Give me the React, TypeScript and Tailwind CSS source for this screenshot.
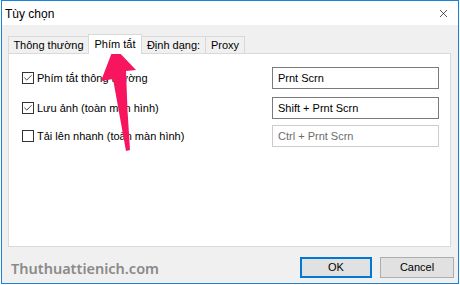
import { Check, X } from 'lucide-react';

const tabs = [
  { label: 'Thông thường', width: 'w-[81px]', active: false },
  { label: 'Phím tắt', width: 'w-[54px]', active: true },
  { label: 'Định dạng:', width: 'w-[65px]', active: false },
  { label: 'Proxy', width: 'w-[40px]', active: false },
];

const rows = [
  { label: 'Phím tắt thông thường', key: 'Prnt Scrn', checked: true, disabled: false, mt: 'mt-[13px]' },
  { label: 'Lưu ảnh (toàn màn hình)', key: 'Shift + Prnt Scrn', checked: true, disabled: false, mt: 'mt-[8px]' },
  { label: 'Tải lên nhanh (toàn màn hình)', key: 'Ctrl + Prnt Scrn', checked: false, disabled: true, mt: 'mt-[6px]' },
];

export default function App() {
  return (
    <div
      className="relative w-[460px] h-[285px] bg-white overflow-hidden text-[11px] text-black"
      style={{ fontFamily: '"Liberation Sans", Arial, sans-serif' }}
    >
      <div className="ml-[1px] w-[458px] h-[284px] border border-[#1a84d8] bg-[#f0f0f0] flex flex-col">
        {/* Title bar */}
        <div className="h-[24px] bg-white flex items-center justify-between pl-[3px] pr-[8px]">
          <span className="text-[12px] leading-none mt-[1px]">Tùy chọn</span>
          <X className="w-[13px] h-[13px] text-[#111]" strokeWidth={1.3} />
        </div>

        {/* Tabs */}
        <div className="flex items-end pl-[6px] h-[28px] relative z-10">
          {tabs.map((tab) => (
            <div
              key={tab.label}
              className={
                tab.active
                  ? `${tab.width} h-[20px] -ml-px bg-white border border-b-0 border-[#d9d9d9] flex items-center justify-center -mb-px whitespace-nowrap`
                  : `${tab.width} h-[17px] -ml-px first:ml-0 bg-[#f0f0f0] border border-b-0 border-[#d9d9d9] flex items-center justify-center whitespace-nowrap`
              }
            >
              <span className="leading-none">{tab.label}</span>
            </div>
          ))}
        </div>

        {/* Panel */}
        <div className="ml-[6px] w-[443px] h-[194px] bg-white border border-[#d9d9d9] flex flex-col pl-[13px] pr-[11px]">
          {rows.map((row) => (
            <div key={row.label} className={`${row.mt} h-[22px] flex items-center justify-between`}>
              <div className="flex items-center gap-[3px]">
                <div className="w-[12px] h-[12px] border border-[#333] bg-white flex items-center justify-center">
                  {row.checked && <Check className="w-[10px] h-[10px] text-[#333]" strokeWidth={2.2} />}
                </div>
                <span className="leading-none">{row.label}</span>
              </div>
              <div
                className={
                  row.disabled
                    ? 'w-[167px] h-[22px] border border-[#cccccc] flex items-center px-[5px] text-[#6d6d6d]'
                    : 'w-[167px] h-[22px] border border-[#7a7a7a] flex items-center px-[5px]'
                }
              >
                <span className="leading-none">{row.key}</span>
              </div>
            </div>
          ))}
        </div>

        {/* Bottom bar */}
        <div className="flex items-center justify-between pl-[9px] pr-[4px] mt-[10px]">
          <span
            className="text-[14.5px] font-semibold text-[#8a8a8a] leading-none mt-[2px]"
            style={{ fontFamily: '"Noto Sans", sans-serif' }}
          >
            Thuthuattienich.com
          </span>
          <div className="flex gap-[8px]">
            <button className="w-[72px] h-[21px] bg-[#e1e1e1] border-2 border-[#0078d7] flex items-center justify-center leading-none">
              OK
            </button>
            <button className="w-[74px] h-[21px] bg-[#e1e1e1] border border-[#adadad] flex items-center justify-center leading-none">
              Cancel
            </button>
          </div>
        </div>
      </div>

      {/* Pink annotation arrow */}
      <svg className="absolute left-0 top-0 pointer-events-none" width="460" height="285" viewBox="0 0 460 285">
        <path
          d="M114 47 L136 70 L126 71 Q127 110 130 150 L126 151 Q119 112 113 79 L101 81 Z"
          fill="#f7155f"
        />
      </svg>
    </div>
  );
}
